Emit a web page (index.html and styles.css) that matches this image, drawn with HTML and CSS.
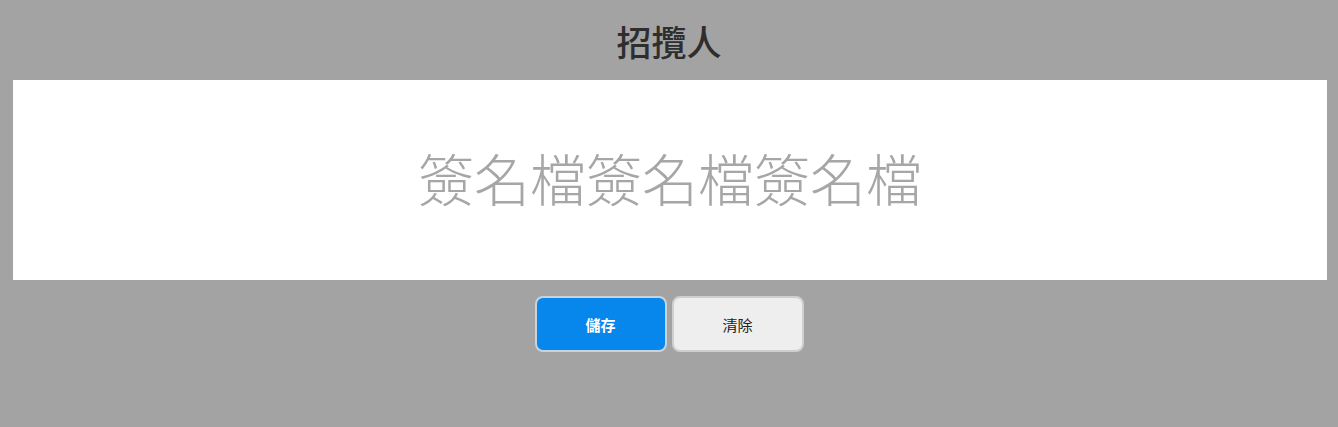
FILE: index.html
```html
<!DOCTYPE html>
<html lang="zh-Hant">
<head>
<meta charset="utf-8">
<title>招攬人</title>
<link rel="stylesheet" href="styles.css">
</head>
<body>
<div class="page">
  <h1 class="title">招攬人</h1>
  <div class="pad">
    <span class="placeholder">簽名檔簽名檔簽名檔</span>
  </div>
  <div class="actions">
    <button class="btn btn-primary" type="button">儲存</button>
    <button class="btn btn-secondary" type="button">清除</button>
  </div>
</div>
</body>
</html>
```

FILE: styles.css
```css
html, body {
  margin: 0;
  padding: 0;
  background: #a3a3a3;
  height: 100%;
}
.page {
  font-family: "Noto Sans CJK TC", "Noto Sans", sans-serif;
  display: flex;
  flex-direction: column;
  align-items: stretch;
}
.title {
  margin: 0;
  height: 80px;
  display: flex;
  align-items: center;
  justify-content: center;
  font-size: 35px;
  font-weight: 500;
  color: #2e2e2e;
  line-height: 1;
}
.pad {
  margin: 0 11px 0 13px;
  height: 200px;
  background: #ffffff;
  display: flex;
  align-items: center;
  justify-content: center;
}
.placeholder {
  font-size: 56px;
  font-weight: 300;
  color: #a6a6a6;
  line-height: 1;
  margin-bottom: 6px;
}
.actions {
  margin-top: 16px;
  display: flex;
  justify-content: center;
  gap: 5px;
}
.btn {
  width: 132px;
  height: 56px;
  border: 2px solid #cfcfcf;
  border-radius: 8px;
  font-family: "Noto Sans CJK TC", "Noto Sans", sans-serif;
  font-size: 15px;
  padding: 0;
}
.btn-primary {
  background: #0787eb;
  color: #ffffff;
  font-weight: 700;
  border-color: #c9d3dc;
}
.btn-secondary {
  background: #eeeeee;
  color: #222222;
  font-weight: 400;
}
```
